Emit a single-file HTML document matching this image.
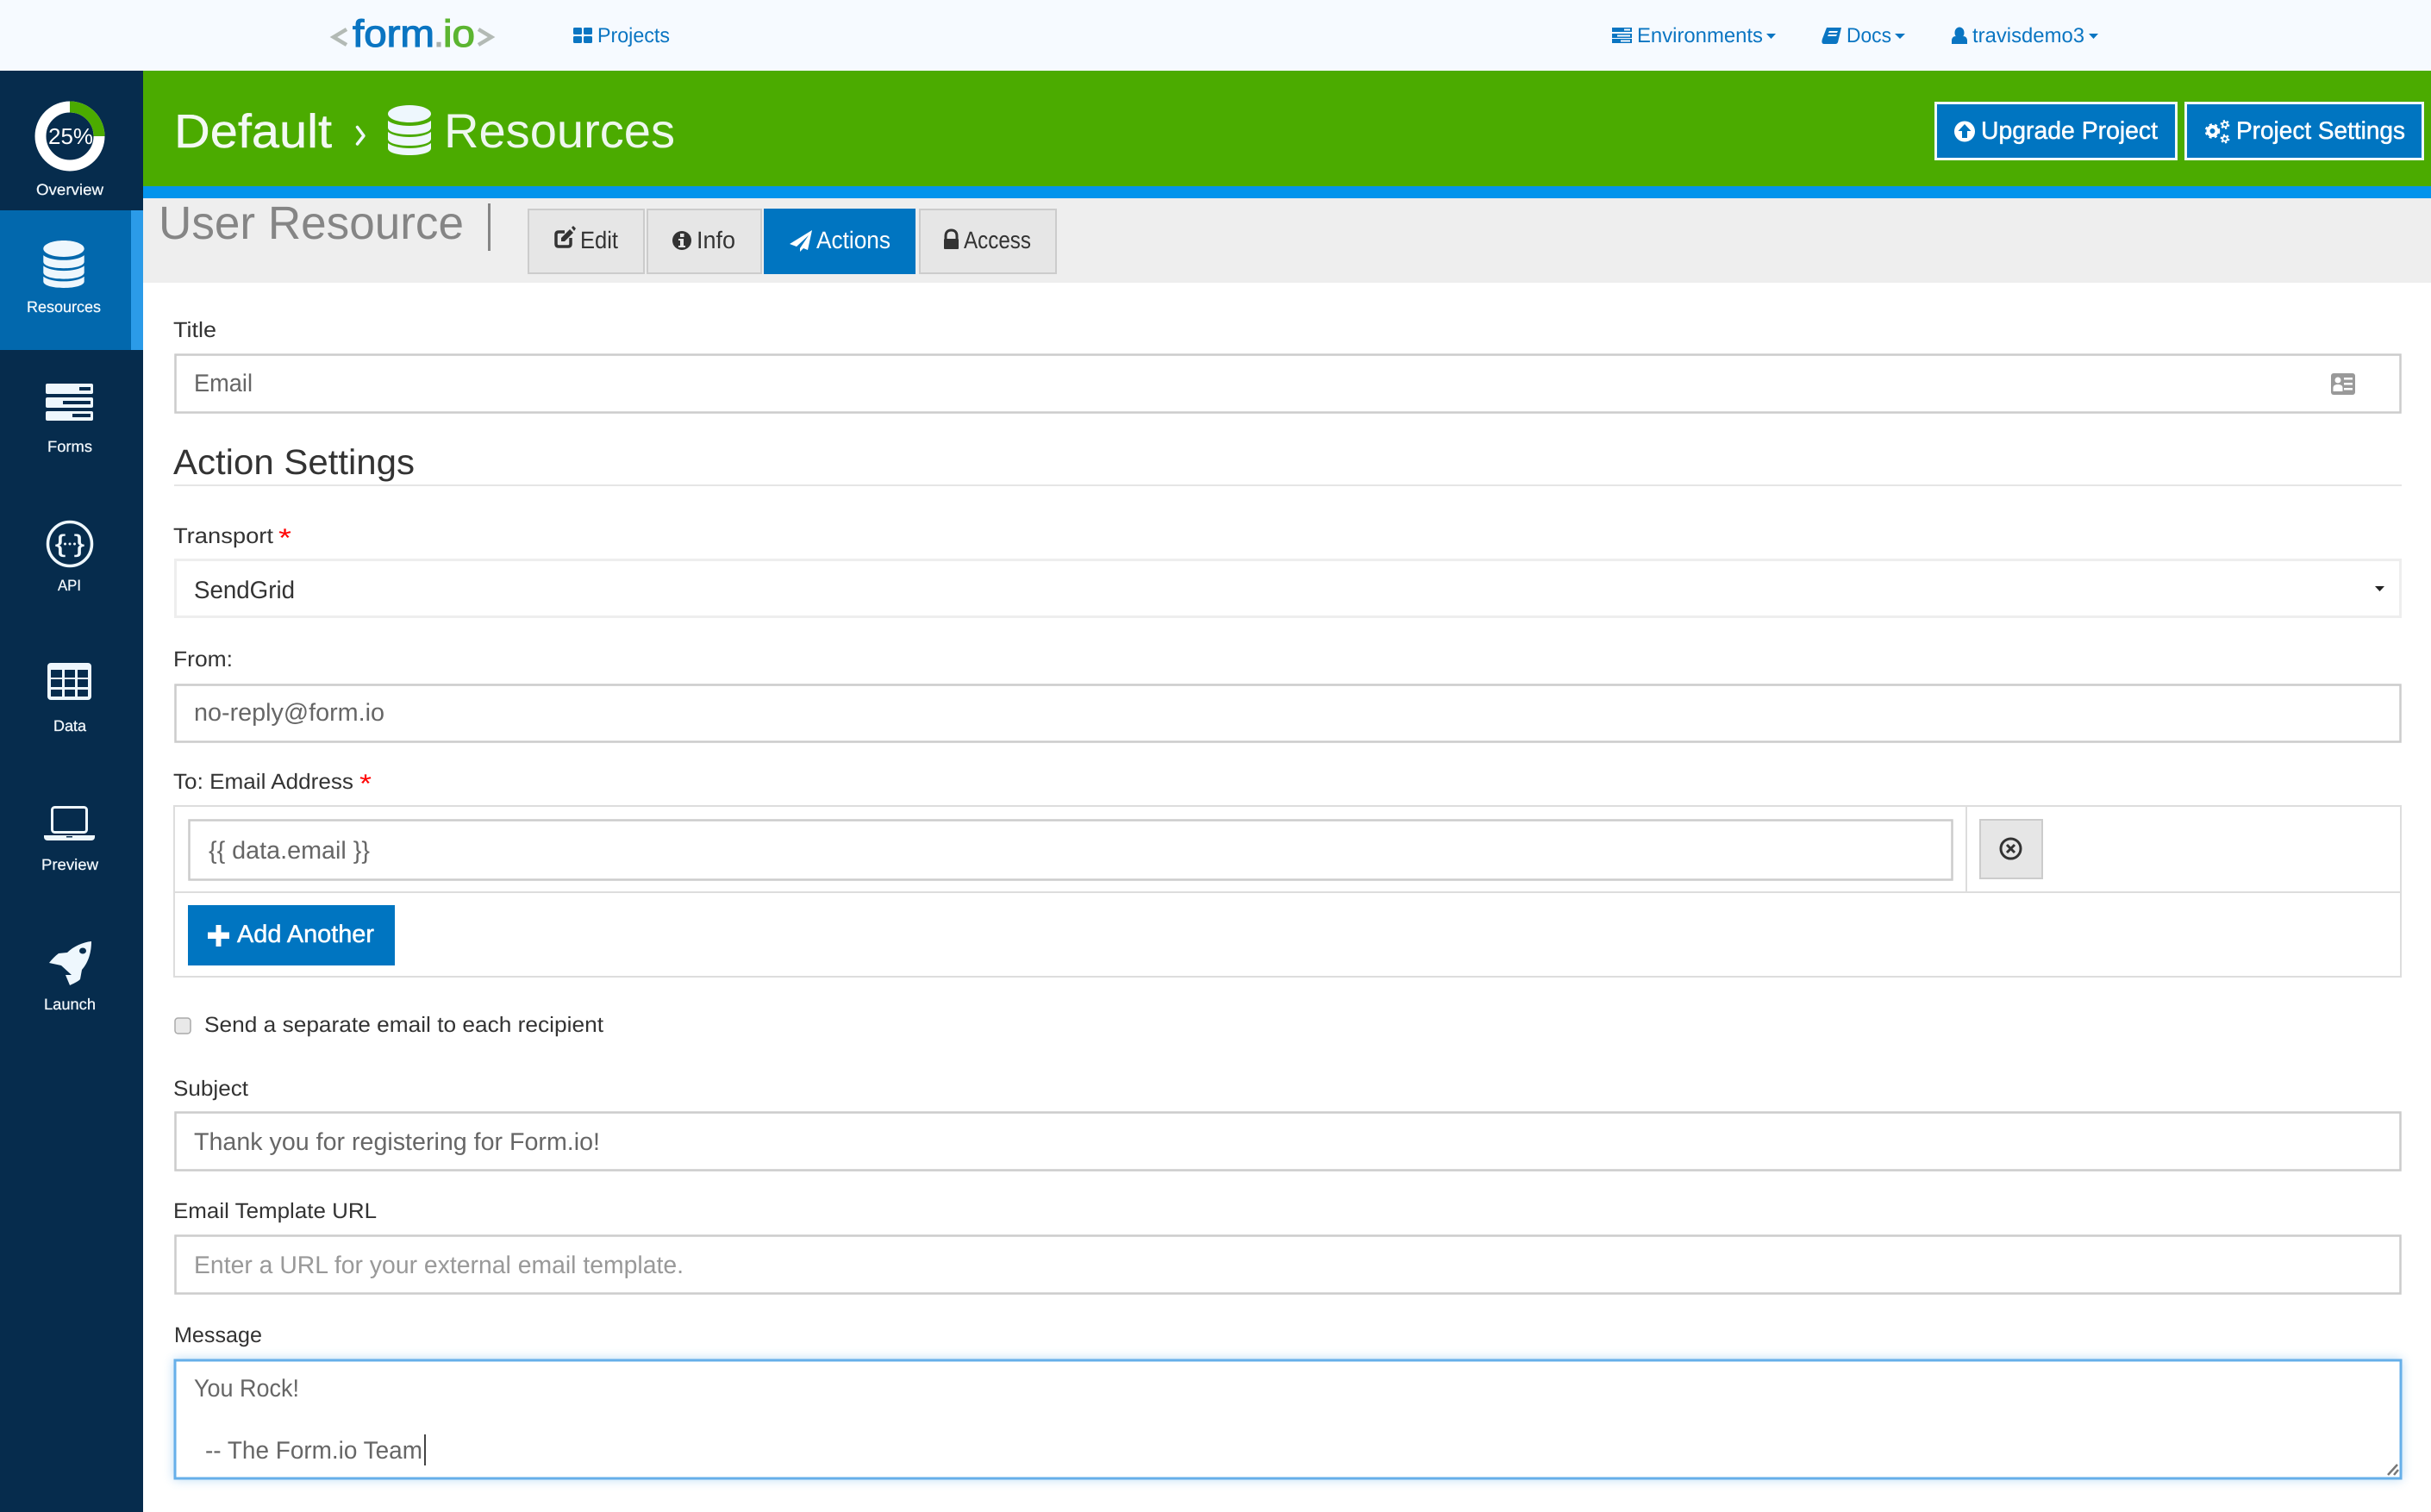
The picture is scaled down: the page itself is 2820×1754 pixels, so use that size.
<!DOCTYPE html>
<html lang="en"><head><meta charset="utf-8"><title>User Resource - Form.io</title>
<style>
html,body{margin:0;padding:0;background:#fff;width:2820px;height:1754px;overflow:hidden}
svg{display:block}
text{font-family:"Liberation Sans",Arial,sans-serif;text-rendering:geometricPrecision}
.nav{font-size:24px;fill:#0a75c2}
.side{font-size:18px;fill:#f2f8fc;stroke:#f2f8fc;stroke-width:.25}
.lab{font-size:25px;fill:#333}
.inp{font-size:28.5px;fill:#666}
.tab{font-size:28px;fill:#333}
.btn{font-size:28.5px;fill:#fff;stroke:#fff;stroke-width:.5}
.field{fill:#fff;stroke:#ccc;stroke-width:2.5}
</style></head><body>
<svg xmlns="http://www.w3.org/2000/svg" width="2820" height="1754" viewBox="0 0 2820 1754">
<defs>
<symbol id="db" viewBox="0 0 50 58"><path d="M25 0C39 0 50 4.500 50 10S39 20 25 20 0 15.500 0 10 11 0 25 0ZM0 18C5 22 15 24 25 24S45 22 50 18V26C50 31 39 34 25 34S0 31 0 26ZM0 31C5 35 15 37 25 37S45 35 50 31V39C50 44 39 47 25 47S0 44 0 39ZM0 44C5 48 15 50 25 50S45 48 50 44V50C50 55 39 58 25 58S0 55 0 50Z"/></symbol>
</defs>

<!-- top nav -->
<rect width="2820" height="82" fill="#f6faff"/>
<polyline points="402,34 387,43 402,52" fill="none" stroke="#b3bab5" stroke-width="4.500"/>
<polyline points="555,34 570,43 555,52" fill="none" stroke="#b3bab5" stroke-width="4.500"/>
<text x="409" y="54" font-size="44" fill="#0a75c2" stroke="#0a75c2" stroke-width="1.200" textLength="95" lengthAdjust="spacingAndGlyphs">form</text>
<text x="503" y="54" font-size="44" fill="#a9b0ac" stroke="#a9b0ac" stroke-width="1" textLength="12" lengthAdjust="spacingAndGlyphs">.</text>
<text x="514" y="54" font-size="44" fill="#5cb531" stroke="#5cb531" stroke-width="1.200" textLength="37" lengthAdjust="spacingAndGlyphs">io</text>

<g fill="#0a75c2">
<rect x="665" y="32" width="10" height="8" rx="1.500"/><rect x="677" y="32" width="10" height="8" rx="1.500"/><rect x="665" y="42" width="10" height="8" rx="1.500"/><rect x="677" y="42" width="10" height="8" rx="1.500"/>
</g>
<text class="nav" x="693" y="49" textLength="84" lengthAdjust="spacingAndGlyphs">Projects</text>

<g fill="#0a75c2">
<rect x="1870" y="32" width="23" height="5"/><rect x="1870" y="39" width="23" height="5"/><rect x="1870" y="45" width="23" height="5"/>
</g>
<g fill="#f6faff"><rect x="1884" y="33.500" width="7" height="2"/><rect x="1876" y="40.500" width="15" height="2"/><rect x="1880" y="46.500" width="11" height="2"/></g>
<text class="nav" x="1899" y="49" textLength="146" lengthAdjust="spacingAndGlyphs">Environments</text>
<polygon points="2049,39 2060,39 2054.500,45" fill="#0a75c2"/>

<path d="M2119 32H2136L2132 49C2131 51 2130 51 2128 51H2116C2113 51 2113 48 2114 45ZM2122 36L2121 38H2131L2132 36ZM2121 40L2120 42H2130L2131 40Z" fill="#0a75c2" fill-rule="evenodd"/>
<text class="nav" x="2142" y="49" textLength="52" lengthAdjust="spacingAndGlyphs">Docs</text>
<polygon points="2198,39 2210,39 2204,45" fill="#0a75c2"/>

<ellipse cx="2273" cy="38" rx="5.500" ry="6.500" fill="#0a75c2"/><path d="M2264 51V47C2264 44 2266 42 2268.500 42C2270 44 2276 44 2277.500 42C2280 42 2282 44 2282 47V51Z" fill="#0a75c2"/>
<text class="nav" x="2288" y="49" textLength="130" lengthAdjust="spacingAndGlyphs">travisdemo3</text>
<polygon points="2423,39 2434,39 2428.500,45" fill="#0a75c2"/>

<!-- green header -->
<rect y="82" width="2820" height="134" fill="#4bab00"/>
<rect y="216" width="2820" height="14" fill="#0494ec"/>
<rect y="230" width="2820" height="98" fill="#eeeeee"/>
<text x="202" y="171" font-size="55" fill="#f3f9f3" stroke="#f3f9f3" stroke-width=".4" textLength="183" lengthAdjust="spacingAndGlyphs">Default</text>
<polyline points="414.500,147.500 422,157.500 414.500,167" fill="none" stroke="#eef7fd" stroke-width="3.500" stroke-linecap="round" stroke-linejoin="round"/>
<use href="#db" x="450" y="122" width="50" height="58" fill="#eef7fd"/>
<text x="515" y="171" font-size="56" fill="#eef7ee" textLength="268" lengthAdjust="spacingAndGlyphs">Resources</text>

<rect x="2245.500" y="119.500" width="279" height="65" fill="#0075c1" stroke="#f2f8fc" stroke-width="3"/>
<rect x="2535.500" y="119.500" width="275" height="65" fill="#0075c1" stroke="#f2f8fc" stroke-width="3"/>
<circle cx="2279" cy="152.500" r="12" fill="#fff"/>
<path d="M2279 144L2286.500 152H2282V160H2276V152H2271.500Z" fill="#0075c1"/>
<text class="btn" x="2298" y="161" textLength="205" lengthAdjust="spacingAndGlyphs">Upgrade Project</text>
<g fill="none" stroke="#fff">
<circle cx="2566.500" cy="152" r="5" stroke-width="4"/>
<circle cx="2566.500" cy="152" r="7.500" stroke-width="2.500" stroke-dasharray="3 3.300"/>
<circle cx="2581" cy="144.500" r="2.800" stroke-width="2"/>
<circle cx="2581" cy="144.500" r="4.500" stroke-width="1.800" stroke-dasharray="2.300 2.400"/>
<circle cx="2581" cy="161" r="2.800" stroke-width="2"/>
<circle cx="2581" cy="161" r="4.500" stroke-width="1.800" stroke-dasharray="2.300 2.400"/>
</g>
<text class="btn" x="2594" y="161" textLength="196" lengthAdjust="spacingAndGlyphs">Project Settings</text>

<!-- sidebar -->
<rect y="82" width="166" height="1672" fill="#062c4d"/>
<rect y="244" width="166" height="162" fill="#0268ad"/>
<rect x="152" y="244" width="14" height="162" fill="#2b9be8"/>

<ellipse cx="81" cy="158" rx="34" ry="34" fill="none" stroke="#fff" stroke-width="13"/>
<path d="M81 124A34 34 0 0 1 115 158" fill="none" stroke="#4bab00" stroke-width="13"/>
<text x="56" y="167" font-size="26" fill="#fff" textLength="52" lengthAdjust="spacingAndGlyphs">25%</text>
<text class="side" x="42" y="226" textLength="78" lengthAdjust="spacingAndGlyphs">Overview</text>

<use href="#db" x="50" y="279" width="48" height="55" fill="#eef7fd"/>
<text class="side" x="31" y="362" textLength="86" lengthAdjust="spacingAndGlyphs">Resources</text>

<g fill="#eef7fd"><rect x="53" y="445" width="55" height="12" rx="2"/><rect x="53" y="461" width="55" height="12" rx="2"/><rect x="53" y="477" width="55" height="11" rx="2"/></g>
<g fill="#062c4d"><rect x="92" y="449" width="13" height="4"/><rect x="73" y="465" width="32" height="4"/><rect x="84" y="480" width="21" height="4"/></g>
<text class="side" x="55" y="524" textLength="52" lengthAdjust="spacingAndGlyphs">Forms</text>

<ellipse cx="81" cy="631" rx="25.500" ry="25.500" fill="none" stroke="#eef7fd" stroke-width="3.500"/>
<text x="64" y="640" font-size="28" fill="#eef7fd" stroke="#eef7fd" stroke-width=".5" textLength="12" lengthAdjust="spacingAndGlyphs">{</text>
<text x="86" y="640" font-size="28" fill="#eef7fd" stroke="#eef7fd" stroke-width=".5" textLength="12" lengthAdjust="spacingAndGlyphs">}</text>
<g fill="#eef7fd"><circle cx="75.500" cy="631" r="1.500"/><circle cx="81" cy="631" r="1.500"/><circle cx="86.500" cy="631" r="1.500"/></g>
<text class="side" x="67" y="685" textLength="27" lengthAdjust="spacingAndGlyphs">API</text>

<rect x="55" y="769" width="51" height="43" rx="4" fill="#eef7fd"/>
<g fill="#062c4d">
<rect x="59" y="777" width="13" height="9"/><rect x="75" y="777" width="12" height="9"/><rect x="90" y="777" width="12" height="9"/>
<rect x="59" y="788" width="13" height="9"/><rect x="75" y="788" width="12" height="9"/><rect x="90" y="788" width="12" height="9"/>
<rect x="59" y="800" width="13" height="8"/><rect x="75" y="800" width="12" height="8"/><rect x="90" y="800" width="12" height="8"/>
</g>
<text class="side" x="62" y="848" textLength="38" lengthAdjust="spacingAndGlyphs">Data</text>

<rect x="60.500" y="936.500" width="40" height="29" rx="3" fill="none" stroke="#eef7fd" stroke-width="3"/>
<path d="M51 969H110V971C110 973.500 108 975 106 975H55C53 975 51 973.500 51 971Z" fill="#eef7fd"/>
<rect x="77" y="970" width="7" height="1.500" fill="#062c4d"/>
<text class="side" x="48" y="1009" textLength="66" lengthAdjust="spacingAndGlyphs">Preview</text>

<path d="M106 1092C96 1093 85 1098 78 1105L68 1106C64 1109 60 1113 57 1117L71 1120L83 1131L76 1131L81 1143C85 1141 90 1139 93 1136L95 1125C103 1116 106 1104 106 1092Z" fill="#eef7fd"/>
<ellipse cx="96" cy="1103" rx="4" ry="3.500" fill="#062c4d"/>
<text class="side" x="51" y="1171" textLength="60" lengthAdjust="spacingAndGlyphs">Launch</text>

<!-- sub header -->
<text x="184" y="277" font-size="54" fill="#858585" textLength="354" lengthAdjust="spacingAndGlyphs">User Resource</text>
<rect x="566" y="236" width="3" height="55" fill="#858585"/>

<g fill="#e6e6e6" stroke="#ccc" stroke-width="2">
<rect x="613" y="243" width="134" height="74"/><rect x="751" y="243" width="132" height="74"/><rect x="1067" y="243" width="158" height="74"/>
</g>
<rect x="886" y="242" width="176" height="76" fill="#0075c1"/>
<path d="M655 269H648C646 269 645 270 645 272V283C645 285 646 286 648 286H659C661 286 662 285 662 283V276" fill="none" stroke="#333" stroke-width="3.500"/>
<path d="M651 276L661 266L665 270L655 280H651ZM663 264L665 262L668 265L666 268Z" fill="#333"/>
<text class="tab" x="673" y="288" textLength="44" lengthAdjust="spacingAndGlyphs">Edit</text>
<circle cx="791" cy="279" r="11" fill="#333"/><rect x="789" y="271" width="4.500" height="4" fill="#e6e6e6"/><path d="M787 277H793V285H795V287H787V285H789V279H787Z" fill="#e6e6e6"/>
<text class="tab" x="808" y="288" textLength="45" lengthAdjust="spacingAndGlyphs">Info</text>
<path d="M942 267L916 283L924 286L938 273L928 288V292L932 288L937 290Z" fill="#fff"/>
<text class="tab" x="947" y="288" textLength="86" lengthAdjust="spacingAndGlyphs" style="fill:#fff">Actions</text>
<path d="M1097 277V274C1097 269 1100 267 1103.500 267S1110 269 1110 274V277" fill="none" stroke="#333" stroke-width="3"/>
<rect x="1095" y="277" width="17" height="12" rx="1" fill="#333"/>
<text class="tab" x="1118" y="288" textLength="78" lengthAdjust="spacingAndGlyphs">Access</text>

<!-- Title -->
<text class="lab" x="201" y="391" textLength="50" lengthAdjust="spacingAndGlyphs">Title</text>
<rect class="field" x="203.500" y="411.500" width="2581" height="67"/>
<text class="inp" x="225" y="454" textLength="68" lengthAdjust="spacingAndGlyphs">Email</text>
<rect x="2704" y="433" width="28" height="25" rx="3" fill="#999"/>
<circle cx="2712" cy="441" r="3.500" fill="#fff"/><path d="M2706.500 454V450C2706.500 447 2709 446 2712 446S2717.500 447 2717.500 450V454Z" fill="#fff"/>
<g fill="#fff"><rect x="2719" y="438" width="10" height="2.500"/><rect x="2719" y="444" width="10" height="2.500"/><rect x="2719" y="450" width="10" height="2.500"/></g>

<!-- Action settings -->
<text x="201" y="550" font-size="41" fill="#333" textLength="280" lengthAdjust="spacingAndGlyphs">Action Settings</text>
<rect x="202" y="562" width="2584" height="2" fill="#e5e5e5"/>

<!-- Transport -->
<text class="lab" x="201" y="630" textLength="116" lengthAdjust="spacingAndGlyphs">Transport</text>
<text x="323" y="634" font-size="30" fill="#f00" textLength="15" lengthAdjust="spacingAndGlyphs">*</text>
<rect x="203.500" y="649.500" width="2581" height="66" fill="#fff" stroke="#eee" stroke-width="3"/>
<text x="225" y="694" font-size="28.500" fill="#333" textLength="117" lengthAdjust="spacingAndGlyphs">SendGrid</text>
<polygon points="2755,680 2766,680 2760.500,686" fill="#222"/>

<!-- From -->
<text class="lab" x="201" y="773" textLength="69" lengthAdjust="spacingAndGlyphs">From:</text>
<rect class="field" x="203.500" y="794.500" width="2581" height="66"/>
<text class="inp" x="225" y="836" textLength="221" lengthAdjust="spacingAndGlyphs">no-reply@form.io</text>

<!-- To -->
<text class="lab" x="201" y="915" textLength="209" lengthAdjust="spacingAndGlyphs">To: Email Address</text>
<text x="417" y="919" font-size="30" fill="#f00" textLength="14" lengthAdjust="spacingAndGlyphs">*</text>
<rect x="202" y="935" width="2583" height="198" fill="#fff" stroke="#ddd" stroke-width="2"/>
<rect x="202" y="1034" width="2583" height="2" fill="#ddd"/>
<rect x="2280" y="935" width="2" height="100" fill="#ddd"/>
<rect class="field" x="219.500" y="951.500" width="2045" height="69"/>
<text class="inp" x="242" y="996" textLength="187" lengthAdjust="spacingAndGlyphs">{{ data.email }}</text>
<rect x="2297" y="951" width="72" height="68" fill="#e6e6e6" stroke="#ccc" stroke-width="2"/>
<circle cx="2332.500" cy="984.500" r="11.500" fill="none" stroke="#333" stroke-width="3"/>
<path d="M2328 980L2337 989M2337 980L2328 989" stroke="#333" stroke-width="3"/>
<rect x="218" y="1050" width="240" height="70" fill="#0075c1"/>
<path d="M241 1081.500H250.500V1073H256.500V1081.500H266V1089H256.500V1098H250.500V1089H241Z" fill="#fff"/>
<text class="btn" x="275" y="1093" textLength="159" lengthAdjust="spacingAndGlyphs">Add Another</text>

<rect x="203" y="1181" width="18" height="18" rx="3.500" fill="#e9e9e9" stroke="#aaa" stroke-width="1.500"/>
<text class="lab" x="237" y="1197" textLength="463" lengthAdjust="spacingAndGlyphs">Send a separate email to each recipient</text>

<!-- Subject -->
<text class="lab" x="201" y="1271" textLength="87" lengthAdjust="spacingAndGlyphs">Subject</text>
<rect class="field" x="203.500" y="1290.500" width="2581" height="67"/>
<text class="inp" x="225" y="1334" textLength="471" lengthAdjust="spacingAndGlyphs">Thank you for registering for Form.io!</text>

<!-- Template -->
<text class="lab" x="201" y="1413" textLength="236" lengthAdjust="spacingAndGlyphs">Email Template URL</text>
<rect class="field" x="203.500" y="1433.500" width="2581" height="67"/>
<text x="225" y="1477" font-size="28.500" fill="#999" textLength="568" lengthAdjust="spacingAndGlyphs">Enter a URL for your external email template.</text>

<!-- Message -->
<text class="lab" x="202" y="1557" textLength="102" lengthAdjust="spacingAndGlyphs">Message</text>
<rect x="203" y="1578" width="2582" height="137" fill="#fff" stroke="#66afe9" stroke-width="3" style="filter:drop-shadow(0 0 6px rgba(102,175,233,.45))"/>
<text class="inp" x="225" y="1620" textLength="122" lengthAdjust="spacingAndGlyphs">You Rock!</text>
<text class="inp" x="238" y="1692" textLength="252" lengthAdjust="spacingAndGlyphs">-- The Form.io Team</text>
<rect x="492" y="1664" width="2" height="36" fill="#444"/>
<path d="M2770 1711L2781 1699M2777 1711L2782 1705" stroke="#777" stroke-width="2.500" fill="none"/>
</svg>
</body></html>
